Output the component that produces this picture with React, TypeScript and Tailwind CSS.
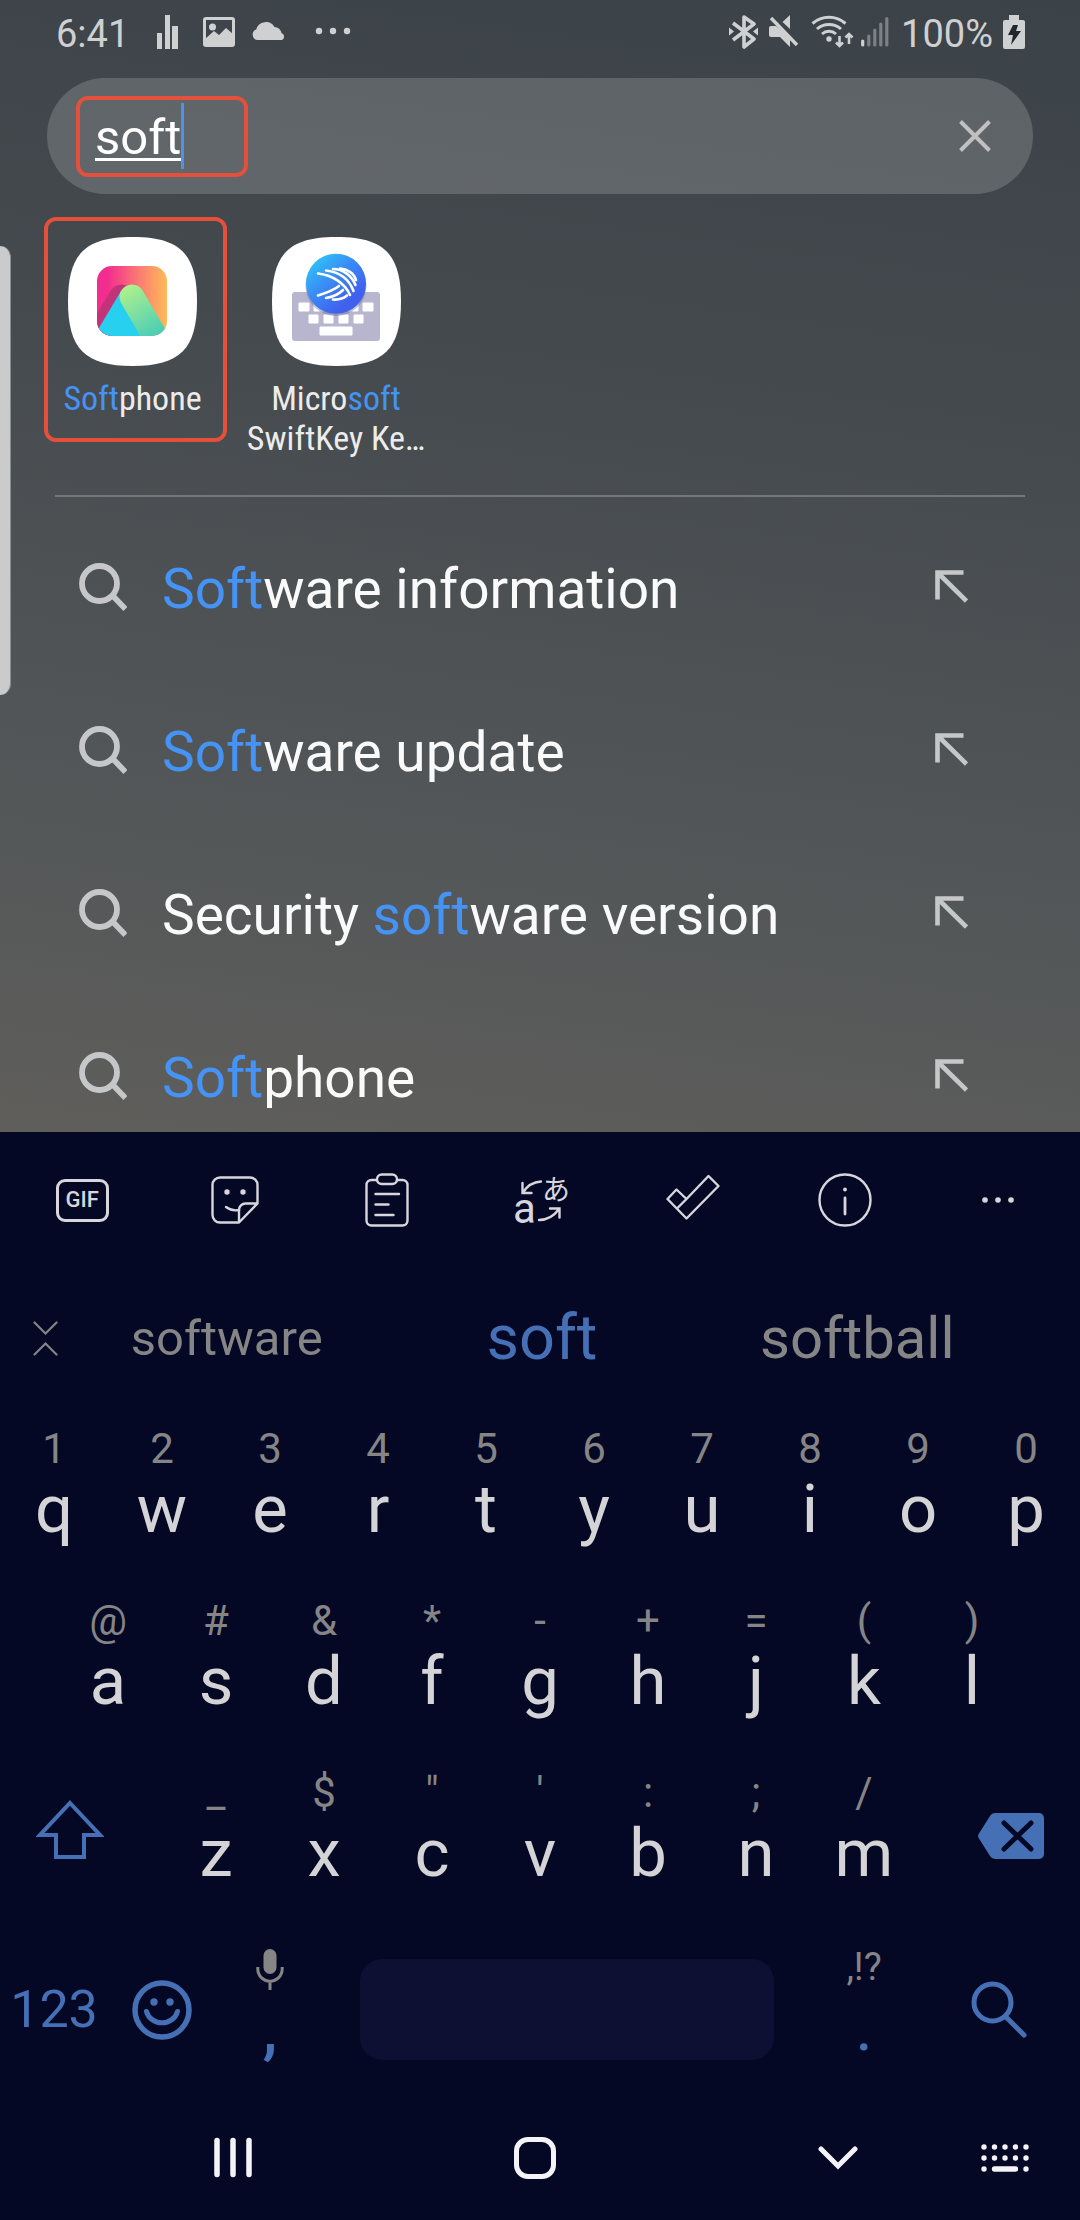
import { useRef, useState } from 'react';
import type { ReactNode } from 'react';

interface AppResult {
  name: string;
  icon: ReactNode;
  highlighted: boolean;
}

const SUGGESTIONS = ['Software information', 'Software update', 'Security software version', 'Softphone'];

const ROW_ONE = [['q', '1'], ['w', '2'], ['e', '3'], ['r', '4'], ['t', '5'], ['y', '6'], ['u', '7'], ['i', '8'], ['o', '9'], ['p', '0']];
const ROW_TWO = [['a', '@'], ['s', '#'], ['d', '&'], ['f', '*'], ['g', '-'], ['h', '+'], ['j', '='], ['k', '('], ['l', ')']];
const ROW_THREE = [['z', '_'], ['x', '$'], ['c', '"'], ['v', "'"], ['b', ':'], ['n', ';'], ['m', '/']];

const SQUIRCLE = 'M64.5 0C112 0 129 17 129 64.5S112 129 64.5 129 0 112 0 64.5 17 0 64.5 0Z';

// Wraps the part of the text that matches the query in a blue span
function Highlight({ text, query }: { text: string; query: string }) {
  const index = query ? text.toLowerCase().indexOf(query.toLowerCase()) : -1;
  if (index < 0) return <>{text}</>;
  return (
    <>
      {text.slice(0, index)}
      <span className="text-[#4593f5]">{text.slice(index, index + query.length)}</span>
      {text.slice(index + query.length)}
    </>
  );
}

function StatusBar() {
  return (
    <div className="flex h-16 items-center justify-between pl-14 pr-[55px] text-[38px] leading-none text-[#cfd0d1]">
      <div className="flex items-center">
        <span className="pt-1">6:41</span>
        <svg className="ml-7" width="22" height="36" viewBox="0 0 22 36" fill="currentColor" aria-hidden="true">
          <path d="M0 19h5v16H0zM8 1h5v34H8zM15 12h6v23h-6z" />
        </svg>
        <svg className="ml-6" width="32" height="32" viewBox="0 0 32 32" fill="currentColor" aria-hidden="true">
          <rect x="1.5" y="2.5" width="29" height="27" rx="1.5" fill="none" stroke="currentColor" strokeWidth="3" />
          <circle cx="9.500" cy="11" r="3.500" />
          <path d="M2 23l9-8 5 4 7-7 7 6v12H2z" />
        </svg>
        <svg className="ml-4" width="36" height="24" viewBox="0 0 36 24" fill="currentColor" aria-hidden="true">
          <path d="M6 20a5.500 5.500 0 0 1-.8-10.500A10 10 0 0 1 23.500 7a7 7 0 0 1 7 6A3.800 3.800 0 0 1 31 20Z" />
        </svg>
        <svg className="ml-7" width="36" height="10" viewBox="0 0 36 10" fill="currentColor" aria-hidden="true">
          <circle cx="4" cy="4" r="3.200" />
          <circle cx="18" cy="4" r="3.200" />
          <circle cx="32" cy="4" r="3.200" />
        </svg>
      </div>
      <div className="flex items-center">
        <svg width="30" height="34" viewBox="0 0 30 34" fill="currentColor" aria-hidden="true">
          <path d="M4 8l21 16-10 8V2l10 7L4 25" fill="none" stroke="currentColor" strokeWidth="3.600" strokeLinejoin="round" />
          <path d="M0 12.500v8l5-4zM29 12.500v8l-5-4z" />
        </svg>
        <svg className="ml-[10px]" width="30" height="34" viewBox="0 0 30 34" fill="currentColor" aria-hidden="true">
          <path d="M13.500 7L21 0v14zM2 11h5l14 12v9L11 22H2a2 2 0 0 1-2-2v-7a2 2 0 0 1 2-2z" />
          <path d="M2 3l26 27" stroke="currentColor" strokeWidth="3.400" />
        </svg>
        <svg className="ml-3" width="44" height="36" viewBox="0 0 44 36" fill="none" stroke="currentColor" strokeWidth="3" aria-hidden="true">
          <path d="M1.500 9.500a25 25 0 0 1 33 0M6 15a18 18 0 0 1 24 0M11 20a10.500 10.500 0 0 1 14 0" />
          <circle cx="18" cy="25" r="2.700" fill="currentColor" stroke="none" />
          <path d="M28.500 22v10M25 28.500l3.500 3.500L32 28.500M38 30V20M34.500 23.500L38 20l3.500 3.500" strokeWidth="2.600" />
        </svg>
        <svg className="ml-[6px]" width="28" height="32" viewBox="0 0 28 32" strokeWidth="3.200" strokeLinecap="round" aria-hidden="true">
          <path d="M1.700 25v4" stroke="#cfd0d1" />
          <path d="M7.800 20v9M13.800 14v15M19.800 8v21M25.800 2.500v26.500" stroke="#7c8186" />
        </svg>
        <span className="ml-3 pt-1">100%</span>
        <svg className="ml-[10px]" width="22" height="34" viewBox="0 0 22 34" fill="currentColor" aria-hidden="true">
          <path d="M6 0h10v5h4a2 2 0 0 1 2 2v25a2 2 0 0 1-2 2H2a2 2 0 0 1-2-2V7a2 2 0 0 1 2-2h4z" />
          <path d="M10 10h5l-2 6h5L8 30l2-10H5z" fill="#22272b" />
        </svg>
      </div>
    </div>
  );
}

function SoftphoneIcon() {
  return (
    <svg width="129" height="129" viewBox="0 0 129 129" aria-hidden="true">
      <defs>
        <linearGradient id="sunset" x1="0" y1="0" x2="1" y2="0">
          <stop offset="0.15" stopColor="#f22d8f" />
          <stop offset="0.65" stopColor="#fb8470" />
          <stop offset="1" stopColor="#ffb956" />
        </linearGradient>
        <linearGradient id="hill" gradientUnits="userSpaceOnUse" x1="58" y1="48" x2="88" y2="98">
          <stop offset="0" stopColor="#b0f28b" />
          <stop offset="1" stopColor="#4bcdb6" />
        </linearGradient>
        <clipPath id="tile">
          <rect x="29" y="29" width="70" height="70" rx="15" />
        </clipPath>
      </defs>
      <path d={SQUIRCLE} fill="#fff" />
      <g clipPath="url(#tile)">
        <rect x="29" y="29" width="70" height="70" fill="url(#sunset)" />
        <path d="M53.500 60L23 111" stroke="#c23379" strokeWidth="25" strokeLinecap="round" />
        <path d="M53 54L25 101h55z" fill="#26d0ee" />
        <path d="M64 60l31 53" stroke="url(#hill)" strokeWidth="25" strokeLinecap="round" />
      </g>
    </svg>
  );
}

function SwiftKeyIcon() {
  return (
    <svg width="129" height="129" viewBox="0 0 129 129" aria-hidden="true">
      <defs>
        <linearGradient id="swift" x1="0.1" y1="0.1" x2="0.7" y2="0.8">
          <stop offset="0" stopColor="#2fc3f8" />
          <stop offset="0.5" stopColor="#3a8bf5" />
          <stop offset="1" stopColor="#4061ee" />
        </linearGradient>
      </defs>
      <path d={SQUIRCLE} fill="#fff" />
      <rect x="20" y="55" width="88" height="49" rx="3" fill="#b8b6cf" />
      <path
        d="M27 66h10v8H27zM42 66h10v8H42zM76 66h10v8H76zM91 66h10v8H91zM37 78h9v8h-9zM52 78h9v8h-9zM67 78h9v8h-9zM82 78h9v8h-9zM48 90h32v8H48z"
        fill="#fff"
        stroke="#fff"
        strokeLinejoin="round"
      />
      <circle cx="64" cy="48.500" r="30.500" fill="#55558a" opacity="0.35" />
      <circle cx="64" cy="46.700" r="30" fill="url(#swift)" />
      <g fill="none" stroke="#fff" strokeWidth="2.600" strokeLinecap="round">
        <path d="M46 36.500C60 38 73 46 78 58M54 33.500C67 35 77 42 81.500 54M61 32C71 32 80 39 83.500 48M68 31.500C75 32 82 36 84 43" />
        <path d="M46 58.500C54 56 62 53 67 49M54 61C61 60 67 57 71 53M61 62.500C67 63 72 61 75 58.500" />
      </g>
    </svg>
  );
}

const APPS: AppResult[] = [
  { name: 'Softphone', icon: <SoftphoneIcon />, highlighted: true },
  { name: 'Microsoft SwiftKey Ke…', icon: <SwiftKeyIcon />, highlighted: false },
];

function Key({ label, hint, onPress }: { label: string; hint: string; onPress: (key: string) => void }) {
  return (
    <button type="button" onClick={() => onPress(label)} className="flex h-[172px] flex-col items-center pt-[14px]">
      <span className="text-[42px] leading-[48px] text-[#858585]">{hint}</span>
      <span className="text-[67px] leading-[72px] text-[#d4d4d6]">{label}</span>
    </button>
  );
}

function Toolbar() {
  const button = 'flex items-center justify-center';
  return (
    <div className="grid h-[136px] grid-cols-7 px-[6px] text-[#d6d6dc]">
      <button type="button" className={button}>
        <span className="flex h-[43px] w-[53px] items-center justify-center rounded-[9px] border-[3px] border-[#d6d6dc] text-[22px] font-medium leading-none">
          GIF
        </span>
      </button>
      <button type="button" aria-label="Stickers" className={button}>
        <svg width="48" height="48" viewBox="0 0 48 48" fill="none" stroke="currentColor" strokeWidth="2.400">
          <path d="M28 46.500H9a7.500 7.500 0 0 1-7.500-7.500V9A7.500 7.500 0 0 1 9 1.500h30A7.500 7.500 0 0 1 46.500 9v18.500L28 46.500V34a6.500 6.500 0 0 1 6.500-6.500h12" strokeLinejoin="round" />
          <path d="M15 31c4 3 8 4 13 3" strokeLinecap="round" />
          <circle cx="16" cy="16" r="2.700" fill="currentColor" stroke="none" />
          <circle cx="32" cy="16" r="2.700" fill="currentColor" stroke="none" />
        </svg>
      </button>
      <button type="button" aria-label="Clipboard" className={button}>
        <svg width="44" height="54" viewBox="0 0 44 54" fill="none" stroke="currentColor" strokeWidth="2.400" strokeLinecap="round">
          <path d="M12 7H6.500a5 5 0 0 0-5 5v35.500a5 5 0 0 0 5 5h31a5 5 0 0 0 5-5V12a5 5 0 0 0-5-5H32" />
          <rect x="12" y="1.500" width="20" height="9.500" rx="4.700" />
          <path d="M10.500 21h23.500M10.500 31.500h13M10.500 42h18" />
        </svg>
      </button>
      <button type="button" aria-label="Translate" className={button}>
        <svg className="overflow-visible" width="54" height="54" viewBox="0 0 54 54" fill="none" stroke="currentColor" strokeWidth="2.400" strokeLinecap="round">
          <text x="0" y="50" fill="currentColor" stroke="none" fontSize="42" fontFamily="Roboto, sans-serif">a</text>
          <text x="29" y="27" fill="currentColor" stroke="none" fontSize="28" fontFamily="'Noto Sans CJK JP', sans-serif">あ</text>
          <path d="M10 19.500C14 13 20 9 28 8.500M9.500 10v10h9M26 47c8 0 15-4 20-11M37 35.500h9.500v9" />
        </svg>
      </button>
      <button type="button" aria-label="Tasks" className={button}>
        <svg width="54" height="54" viewBox="0 -6 54 54" fill="none" stroke="currentColor" strokeWidth="2.400" strokeLinejoin="round">
          <path d="M20.500 20L42.500-3 52.500 7 20.500 39.500 1.500 20 10.500 10.500 20.500 20 11 29.500" />
        </svg>
      </button>
      <button type="button" aria-label="Info" className={button}>
        <svg width="54" height="54" viewBox="0 0 54 54" fill="none" stroke="currentColor" strokeWidth="2.400">
          <circle cx="27" cy="27" r="25.500" />
          <circle cx="27" cy="16.500" r="1.900" fill="currentColor" stroke="none" />
          <path d="M27 25v16" strokeWidth="2.800" strokeLinecap="round" />
        </svg>
      </button>
      <button type="button" aria-label="More" className={button}>
        <svg width="34" height="8" viewBox="0 0 34 8" fill="currentColor">
          <circle cx="4" cy="4" r="2.800" />
          <circle cx="17" cy="4" r="2.800" />
          <circle cx="30" cy="4" r="2.800" />
        </svg>
      </button>
    </div>
  );
}

function Keyboard({ onPress, onDelete }: { onPress: (key: string) => void; onDelete: () => void }) {
  return (
    <section aria-label="Keyboard" className="shrink-0 bg-[#050825]">
      <Toolbar />

      {/* Word predictions */}
      <div className="flex h-[143px] items-center pb-[2px] pl-[33px] pr-[65px]">
        <button type="button" aria-label="Collapse toolbar" className="pr-[11px] text-[#858585]">
          <svg width="25" height="36" viewBox="0 0 25 36" fill="none" stroke="currentColor" strokeWidth="2.200" strokeLinecap="round">
            <path d="M1.500 1.500l11 11 11-11M1.500 33.500l11-11 11 11" />
          </svg>
        </button>
        <div className="grid flex-1 grid-cols-3 items-center text-[#858585]">
          <button type="button" className="text-[49px]">software</button>
          <button type="button" className="text-[63px] text-[#4670b5]">soft</button>
          <button type="button" className="text-[58px]">softball</button>
        </div>
      </div>

      <div className="grid grid-cols-10">
        {ROW_ONE.map(([label, hint]) => <Key key={label} label={label} hint={hint} onPress={onPress} />)}
      </div>
      <div className="grid grid-cols-9 px-[5%]">
        {ROW_TWO.map(([label, hint]) => <Key key={label} label={label} hint={hint} onPress={onPress} />)}
      </div>
      <div className="grid grid-cols-[3fr_2fr_2fr_2fr_2fr_2fr_2fr_2fr_3fr] text-[#4670b5]">
        <button type="button" aria-label="Shift" className="flex items-center justify-center pb-[22px] pr-[22px]">
          <svg width="68" height="60" viewBox="0 0 68 60" fill="none" stroke="currentColor" strokeWidth="4">
            <path d="M34 3l30 32H48v22H20V35H4z" />
          </svg>
        </button>
        {ROW_THREE.map(([label, hint]) => <Key key={label} label={label} hint={hint} onPress={onPress} />)}
        <button type="button" aria-label="Backspace" onClick={onDelete} className="flex items-center justify-center pb-[10px] pl-6">
          <svg width="66" height="46" viewBox="0 0 66 46">
            <path d="M1 25.500a4 4 0 0 1 0-5L12 3a6 6 0 0 1 5-3h44a5 5 0 0 1 5 5v36a5 5 0 0 1-5 5H17a6 6 0 0 1-5-3z" fill="currentColor" />
            <path d="M26 10l27 26M53 10L26 36" stroke="#050825" strokeWidth="5" strokeLinecap="round" />
          </svg>
        </button>
      </div>
      <div className="grid grid-cols-[2fr_2fr_2fr_9fr_2fr_3fr] text-[#4670b5]">
        <button type="button" className="pb-[6px] text-[52px]">123</button>
        <button type="button" aria-label="Emoji" className="flex items-center justify-center pb-[6px]">
          <svg width="60" height="60" viewBox="0 0 60 60" fill="none" stroke="currentColor" strokeWidth="5.500">
            <circle cx="30" cy="30" r="27" />
            <circle cx="22" cy="22" r="3.700" fill="currentColor" stroke="none" />
            <circle cx="38" cy="22" r="3.700" fill="currentColor" stroke="none" />
            <path d="M14.500 31.500a16 15 0 0 0 31 0" strokeWidth="5" strokeLinecap="round" />
          </svg>
        </button>
        <button type="button" aria-label="Comma" onClick={() => onPress(',')} className="flex h-[172px] flex-col items-center pt-4">
          <span className="flex h-12 items-center pt-1 text-[#858585]">
            <svg width="28" height="41" viewBox="0 0 28 41" fill="none" stroke="currentColor" strokeWidth="3">
              <rect x="7.500" y="0" width="13" height="25" rx="6.500" fill="currentColor" stroke="none" />
              <path d="M1.800 18v2a12.200 12.200 0 0 0 24.400 0v-2M14 32v9" />
            </svg>
          </span>
          <span className="text-[67px] font-medium leading-[76px]">,</span>
        </button>
        <div className="flex items-center px-9 pb-2">
          <button type="button" aria-label="Space" onClick={() => onPress(' ')} className="h-[101px] w-full rounded-[22px] bg-[#0d0f33]" />
        </div>
        <button type="button" onClick={() => onPress('.')} className="flex h-[172px] flex-col items-center pt-4">
          <span className="text-[38px] leading-[48px] text-[#858585]">,!?</span>
          <span className="text-[67px] leading-[72px]">.</span>
        </button>
        <button type="button" aria-label="Search" className="flex items-center justify-center pb-2">
          <svg width="56" height="58" viewBox="0 0 56 58" fill="none" stroke="currentColor" strokeWidth="5">
            <circle cx="21.500" cy="22.500" r="18.500" />
            <path d="M35 37l18 18" strokeLinecap="round" />
          </svg>
        </button>
      </div>

      <nav className="flex h-[121px] items-stretch pb-1 pl-[82px] text-[#f4f4f8]">
        <button type="button" aria-label="Recent apps" className="flex flex-1 items-center justify-center">
          <svg width="38" height="41" viewBox="0 0 38 41" stroke="currentColor" strokeWidth="5.500" strokeLinecap="round">
            <path d="M3 3.500v34M19 3.500v34M35 3.500v34" />
          </svg>
        </button>
        <button type="button" aria-label="Home" className="flex flex-1 items-center justify-center">
          <svg width="42" height="42" viewBox="0 0 42 42" fill="none" stroke="currentColor" strokeWidth="5">
            <rect x="2.500" y="2.500" width="37" height="37" rx="11.500" />
          </svg>
        </button>
        <button type="button" aria-label="Hide keyboard" className="flex flex-1 items-center justify-center">
          <svg width="40" height="24" viewBox="0 0 40 24" fill="none" stroke="currentColor" strokeWidth="5" strokeLinecap="round">
            <path d="M3 3l17 17L37 3" />
          </svg>
        </button>
        <button type="button" aria-label="Switch keyboard" className="-ml-2 flex w-[99px] items-center">
          <svg width="48" height="28" viewBox="0 0 48 28" stroke="currentColor" strokeWidth="5.400" strokeLinecap="round">
            <path d="M3 3h.01M13.500 3h.01M24 3h.01M34.500 3h.01M45 3h.01M3 14h.01M13.500 14h.01M24 14h.01M34.500 14h.01M45 14h.01M3 25h.01M13.500 25h21M45 25h.01" />
          </svg>
        </button>
      </nav>
    </section>
  );
}

export default function App() {
  const [query, setQuery] = useState('soft');
  const inputRef = useRef<HTMLInputElement>(null);

  const handleClear = () => {
    setQuery('');
    inputRef.current?.focus();
  };

  return (
    <div className="flex h-screen flex-col overflow-hidden bg-[#050825] font-[Roboto,sans-serif]">
      <main className="relative flex min-h-0 flex-1 flex-col overflow-hidden bg-[linear-gradient(188deg,#3b4248_0%,#454a4e_35%,#525658_70%,#5f5e5b_100%)]">
        <StatusBar />

        {/* Edge panel handle */}
        <div className="absolute left-0 top-[246px] h-[449px] w-[11px] rounded-r-[11px] border-r border-[#8b8e90] bg-[#c9cbcc]" />

        <div className="mx-[47px] mt-[14px] flex h-[116px] shrink-0 items-center justify-between rounded-full bg-white/17 pl-[29px] pr-[42px]">
          <div className="flex h-[81px] w-[172px] items-center rounded-xl border-4 border-[#e5503c] pl-[15px]">
            <input
              ref={inputRef}
              type="text"
              aria-label="Search"
              value={query}
              onChange={(e) => setQuery(e.target.value)}
              className="min-w-0 field-sizing-content bg-transparent pt-1 text-[49px] leading-[66px] text-white underline decoration-[3px] underline-offset-[4px] caret-transparent outline-none"
            />
            <span className="h-[66px] w-[3px] bg-[#4f92ea]" />
          </div>
          <button type="button" aria-label="Clear search" onClick={handleClear} className="text-[#c0c0c0]">
            <svg width="32" height="32" viewBox="0 0 32 32" fill="none" stroke="currentColor" strokeWidth="4">
              <path d="M1.500 1.500l29 29M30.500 1.500l-29 29" />
            </svg>
          </button>
        </div>

        <div className="mt-[23px] flex h-[278px] shrink-0 gap-[11px] px-11 font-['Roboto_Condensed',Roboto,sans-serif]">
          {APPS.map((app) => (
            <button
              key={app.name}
              type="button"
              className={
                app.highlighted
                  ? 'flex h-[225px] w-[183px] flex-col items-center rounded-xl border-4 border-[#e5503c] pr-[6px] pt-4'
                  : 'flex w-[196px] flex-col items-center pt-5'
              }
            >
              {app.icon}
              <span className="mt-[12px] text-[34px] leading-10 text-[#ececec]">
                <Highlight text={app.name} query={query} />
              </span>
            </button>
          ))}
        </div>

        <hr className="mx-[55px] border-t-2 border-[#75787a]" />

        <ul className="mt-[11px] min-h-0 flex-1 overflow-hidden">
          {SUGGESTIONS.map((suggestion) => (
            <li key={suggestion} className="flex h-[163px] items-center pl-[79px] pr-28">
              <button type="button" onClick={() => setQuery(suggestion)} className="flex flex-1 items-center text-left text-[55px] text-[#fafafa]">
                <svg className="mr-[35px]" width="48" height="54" viewBox="0 0 48 54" fill="none" stroke="#c6c7c8" strokeWidth="5.800" aria-hidden="true">
                  <circle cx="20.500" cy="20.500" r="17.500" />
                  <path d="M33 32l13.500 14" />
                </svg>
                <span>
                  <Highlight text={suggestion} query={query} />
                </span>
              </button>
              <button type="button" aria-label={`Use ${suggestion}`} onClick={() => setQuery(suggestion)} className="pb-[6px] text-[#c6c7c8]">
                <svg width="33" height="33" viewBox="0 0 33 33" fill="none" stroke="currentColor" strokeWidth="4.600">
                  <path d="M28.500 2.500h-26v27M2.500 2.500l29 28.500" />
                </svg>
              </button>
            </li>
          ))}
        </ul>
      </main>

      <Keyboard onPress={(key) => setQuery(query + key)} onDelete={() => setQuery(query.slice(0, -1))} />
    </div>
  );
}
